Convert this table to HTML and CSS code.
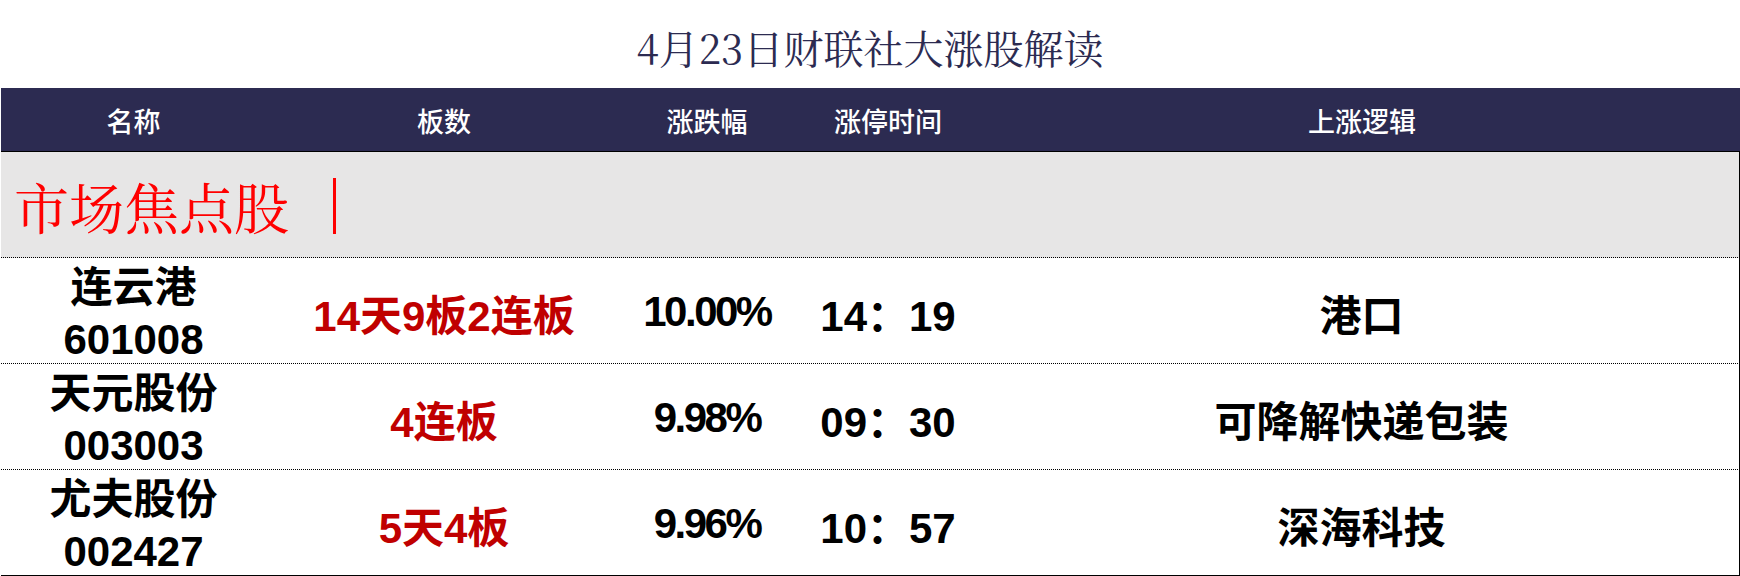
FILE: index.html
```html
<!DOCTYPE html>
<html lang="zh-CN">
<head>
<meta charset="utf-8">
<title>4月23日财联社大涨股解读</title>
<link rel="stylesheet" href="styles.css">
</head>
<body>
<div class="title">4月23日财联社大涨股解读</div>
<div class="table">
  <div class="row head">
    <div class="cell">名称</div>
    <div class="cell">板数</div>
    <div class="cell">涨跌幅</div>
    <div class="cell">涨停时间</div>
    <div class="cell">上涨逻辑</div>
  </div>
  <div class="section">
    <span class="section-text">市场焦点股</span><span class="section-bar"></span>
  </div>
  <div class="row data">
    <div class="cell name"><span>连云港</span><span>601008</span></div>
    <div class="cell boards">14天9板2连板</div>
    <div class="cell pct">10.00%</div>
    <div class="cell time">14：19</div>
    <div class="cell logic">港口</div>
  </div>
  <div class="row data">
    <div class="cell name"><span>天元股份</span><span>003003</span></div>
    <div class="cell boards">4连板</div>
    <div class="cell pct">9.98%</div>
    <div class="cell time">09：30</div>
    <div class="cell logic">可降解快递包装</div>
  </div>
  <div class="row data last">
    <div class="cell name"><span>尤夫股份</span><span>002427</span></div>
    <div class="cell boards">5天4板</div>
    <div class="cell pct">9.96%</div>
    <div class="cell time">10：57</div>
    <div class="cell logic">深海科技</div>
  </div>
</div>
</body>
</html>
```

FILE: styles.css
```css
html, body {
  margin: 0;
  padding: 0;
  background: #ffffff;
}

body {
  width: 1740px;
  height: 576px;
  overflow: hidden;
  font-family: "Liberation Sans", "Noto Sans CJK SC", sans-serif;
}

.title {
  height: 88px;
  box-sizing: border-box;
  padding-top: 4px;
  display: flex;
  align-items: center;
  justify-content: center;
  font-family: "Noto Serif CJK SC", "Source Han Serif SC", "AR PL UMing CN", "Liberation Serif", "Noto Sans CJK SC", serif;
  font-size: 40px;
  color: #2c2b51;
}

.table {
  margin-left: 1px;
  width: 1739px;
}

.row {
  display: grid;
  grid-template-columns: 265px 356px 170px 192px 1fr;
}

.cell {
  display: flex;
  align-items: center;
  justify-content: center;
  text-align: center;
}

.head {
  height: 64px;
  box-sizing: border-box;
  background: #2c2b51;
  border-bottom: 1px solid #000000;
  color: #ffffff;
  font-size: 27px;
  font-weight: 500;
}

.head .cell {
  padding-top: 1px;
}

.section {
  height: 106px;
  box-sizing: border-box;
  background: #e7e6e6;
  border-bottom: 1px dotted #000000;
  border-right: 1px solid #000000;
  display: flex;
  align-items: center;
  padding-left: 13px;
  padding-top: 2px;
}

.section-text {
  font-family: "Noto Serif CJK SC", "Source Han Serif SC", "AR PL UMing CN", "Liberation Serif", "Noto Sans CJK SC", serif;
  font-size: 55px;
  line-height: 60px;
  color: #ff0000;
}

.section-bar {
  display: inline-block;
  width: 3px;
  height: 56px;
  background: #ff0000;
  margin-left: 44px;
}

.data {
  height: 106px;
  box-sizing: border-box;
  border-bottom: 1px dotted #000000;
  border-right: 1px solid #000000;
  font-size: 42px;
  font-weight: 700;
  color: #000000;
}

.data.last {
  border-bottom: 1px solid #000000;
}

.name {
  flex-direction: column;
  line-height: 52px;
  padding-top: 4px;
}

.name span {
  display: block;
}

.boards {
  color: #c00000;
}

.pct {
  letter-spacing: -2.5px;
}
```
